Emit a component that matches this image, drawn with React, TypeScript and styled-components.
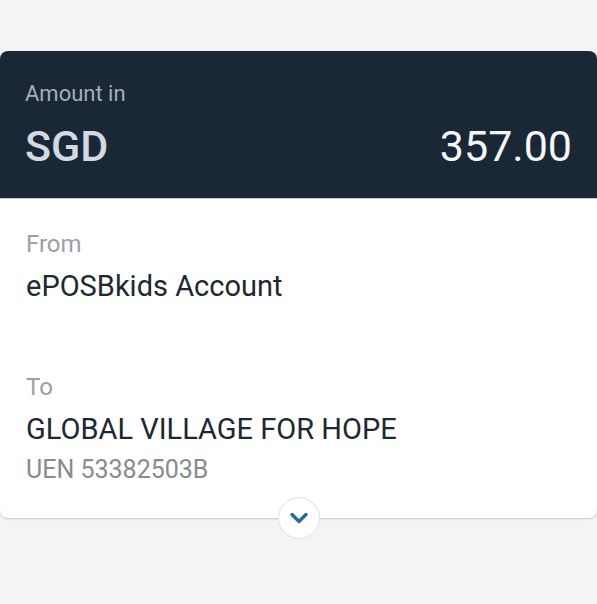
import React from "react";
import styled, { createGlobalStyle } from "styled-components";

const Global = createGlobalStyle`
  html, body { margin: 0; padding: 0; background: #f3f4f6; }
  body { font-family: Roboto, "Liberation Sans", sans-serif; -webkit-font-smoothing: antialiased; }
`;

const Page = styled.div`
  padding-top: 51px;
  min-height: 604px;
  box-sizing: border-box;
`;

const Card = styled.div`
  position: relative;
  background: #ffffff;
  border-radius: 8px;
  box-shadow: 0 1px 2px rgba(0, 0, 0, 0.18);
`;

const Header = styled.div`
  background: #1a2735;
  border-radius: 8px 8px 0 0;
  padding: 30px 25px 28px 25px;
  display: flex;
  flex-direction: column;
  gap: 15px;
  border-bottom: 1px solid #c9d0d6;
  height: 148px;
  box-sizing: border-box;
`;

const Caption = styled.div`
  font-size: 22px;
  line-height: 25px;
  color: #a5afb9;
`;

const AmountRow = styled.div`
  display: flex;
  justify-content: space-between;
  align-items: center;
  height: 50px;
`;

const Currency = styled.div`
  font-size: 43px;
  font-weight: 500;
  color: #d2d9e0;
  line-height: 50px;
`;

const Amount = styled.div`
  font-size: 43px;
  font-weight: 400;
  color: #f4f6f8;
  line-height: 50px;
`;

const Body = styled.div`
  padding: 31px 26px 33px 26px;
  display: flex;
  flex-direction: column;
  gap: 70px;
`;

const Section = styled.div`
  display: flex;
  flex-direction: column;
`;

const Label = styled.div`
  font-size: 24px;
  line-height: 28px;
  color: #9b9fa4;
`;

const Value = styled.div`
  font-size: 29px;
  line-height: 34px;
  color: #1d2831;
  margin-top: 11px;
`;

const Sub = styled.div`
  font-size: 25px;
  line-height: 30px;
  color: #868b90;
  margin-top: 9px;
`;

const Toggle = styled.button`
  position: absolute;
  left: 50%;
  bottom: -21px;
  transform: translateX(-50%);
  width: 42px;
  height: 42px;
  border-radius: 50%;
  background: #ffffff;
  border: 1px solid #dde1e5;
  display: flex;
  align-items: center;
  justify-content: center;
  padding: 0;
`;

export default function App() {
  return (
    <>
      <Global />
      <Page>
        <Card>
          <Header>
            <Caption>Amount in</Caption>
            <AmountRow>
              <Currency>SGD</Currency>
              <Amount>357.00</Amount>
            </AmountRow>
          </Header>
          <Body>
            <Section>
              <Label>From</Label>
              <Value>ePOSBkids Account</Value>
            </Section>
            <Section>
              <Label>To</Label>
              <Value>GLOBAL VILLAGE FOR HOPE</Value>
              <Sub>UEN 53382503B</Sub>
            </Section>
          </Body>
          <Toggle aria-label="expand">
            <svg width="20" height="14" viewBox="0 0 20 14">
              <path d="M3 3.5 L10 10.5 L17 3.5" fill="none" stroke="#1f6d9c" strokeWidth="3.4" strokeLinecap="round" strokeLinejoin="round" />
            </svg>
          </Toggle>
        </Card>
      </Page>
    </>
  );
}
